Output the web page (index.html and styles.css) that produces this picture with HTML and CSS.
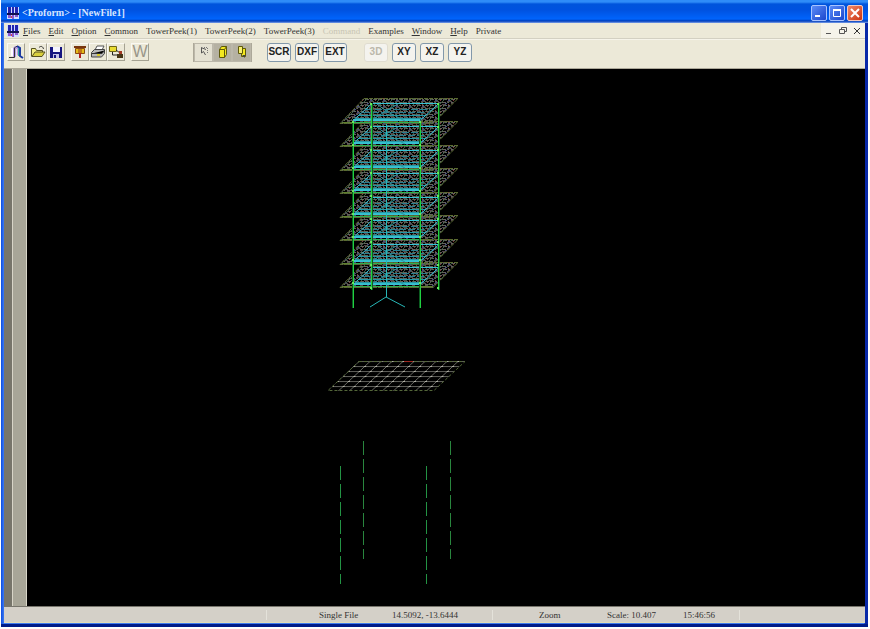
FILE: index.html
```html
<!DOCTYPE html>
<html lang="en">
<head>
<meta charset="utf-8">
<title>Proform - NewFile1</title>
<link rel="stylesheet" href="styles.css">
</head>
<body>
<svg width="0" height="0" class="sprites" aria-hidden="true">
  <symbol id="logo" viewBox="0 0 12 12">
    <path fill="#cfdcff" d="M0 0h12v12H0z"/>
    <path fill="#2424b0" d="M1 0h3v6H1zM5 0h2v6H5zM8 0h3v6H8z"/>
    <path fill="#101050" d="M0 6h12v2H0z"/>
    <path fill="#8a5ad0" d="M1 8h3v3H1zM5 8h2v4H5zM8 8h3v2H8z"/>
    <path fill="#d04848" d="M4 9h1v2H4z"/>
  </symbol>
</svg>
<div class="window">
  <header class="titlebar">
    <svg class="logo"><use href="#logo"/></svg>
    <h1 class="title">&lt;Proform&gt; - [NewFile1]</h1>
    <div class="captions">
      <button class="caption" aria-label="Minimize"><svg viewBox="0 0 14 14"><path fill="#fff" d="M3 9h5v2H3z"/></svg></button>
      <button class="caption" aria-label="Maximize"><svg viewBox="0 0 14 14"><path fill="none" stroke="#fff" d="M3.500 4.500h7v6h-7z"/><path fill="#fff" d="M3 3h8v2H3z"/></svg></button>
      <button class="caption close" aria-label="Close"><svg viewBox="0 0 14 14"><path stroke="#fff" stroke-width="2" d="M3 3l8 8M11 3l-8 8"/></svg></button>
    </div>
  </header>
  <nav class="menubar">
    <svg class="logo"><use href="#logo"/></svg>
    <div class="menus">
      <button class="menu"><u>F</u>iles</button>
      <button class="menu"><u>E</u>dit</button>
      <button class="menu"><u>O</u>ption</button>
      <button class="menu"><u>C</u>ommon</button>
      <button class="menu">TowerPeek(1)</button>
      <button class="menu">TowerPeek(2)</button>
      <button class="menu">TowerPeek(3)</button>
      <button class="menu" disabled>Command</button>
      <button class="menu">Examples</button>
      <button class="menu"><u>W</u>indow</button>
      <button class="menu"><u>H</u>elp</button>
      <button class="menu">Private</button>
    </div>
    <div class="mdi">
      <button aria-label="Minimize document"><svg viewBox="0 0 10 10"><path fill="#555" d="M2 7h5v1H2z"/></svg></button>
      <button aria-label="Restore document"><svg viewBox="0 0 10 10"><path fill="none" stroke="#555" d="M3.500 3V1.500h5v4H7M1.500 3.500h5v4h-5z"/></svg></button>
      <button aria-label="Close document"><svg viewBox="0 0 10 10"><path stroke="#333" d="M2 2l6 6M8 2l-6 6"/></svg></button>
    </div>
  </nav>
  <div class="toolbar">
    <div class="tools">
      <button class="tool" aria-label="New"><svg viewBox="0 0 16 16"><path fill="#b79be4" d="M5 13V4l2-2h3l2 2v8l-3-1V5H8v8z"/><path fill="none" stroke="#fff" stroke-width="2" d="M4 12V4"/><path fill="none" stroke="#333" d="M1 13.500h5.500V4l1.500-1.500h2"/><path fill="none" stroke="#1c3aa0" stroke-width="2" d="M9 2l3 2v8l3 2"/><path fill="none" stroke="#2fa6a6" d="M10.500 4v8"/></svg></button>
    </div>
    <div class="tools">
      <button class="tool" aria-label="Open"><svg viewBox="0 0 16 16"><path fill="#f4ee80" stroke="#555020" d="M1.500 12.500v-8h4l1 2h6v2"/><path fill="#d9cf3c" stroke="#555020" d="M2 12.500l3-4.500h10l-3 4.500z"/><path fill="none" stroke="#333" d="M9 3.500c2-2 4-1 4.500 1.500"/></svg></button>
      <button class="tool" aria-label="Save"><svg viewBox="0 0 16 16"><path fill="#151580" d="M2 3h12v11H2z"/><path fill="#f4f4ff" d="M5 3h7v5H5z"/><path fill="#c4c4e8" d="M5 10h6v4H5z"/><path fill="#151580" d="M6 11h2v3H6z"/></svg></button>
    </div>
    <div class="tools">
      <button class="tool" aria-label="Plot"><svg viewBox="0 0 16 16"><path fill="#79360f" d="M2 2h12v2H2z"/><path fill="#e5bc18" stroke="#8a4a10" d="M3.500 4.500h9v5h-9z"/><path fill="#c07818" d="M6 5h4v4H6z"/><path fill="#b32020" d="M7 9h2v5H7z"/></svg></button>
      <button class="tool" aria-label="Print"><svg viewBox="0 0 16 16"><path fill="#fff" stroke="#555" d="M5 6l2-4h7l-2 4"/><path fill="#b8b8b8" stroke="#444" d="M1.500 8.500l3-3h10v4l-3 3.500h-10z"/><path stroke="#333" d="M2 9.500h10l2.500-3"/><path fill="#d8c92c" d="M7 10h3v2H7z"/></svg></button>
      <button class="tool" aria-label="Tree"><svg viewBox="0 0 16 16"><path fill="#e9dc30" stroke="#6f6618" d="M1.500 2.500h7v5h-7z"/><path fill="none" stroke="#222" d="M4.500 8v3H9M8 6l4 3"/><path fill="#a33922" d="M11 7h3v3h-3z"/><path fill="#463516" d="M9 10h6v4H9z"/></svg></button>
    </div>
    <div class="tools">
      <button class="tool word" aria-label="Word" disabled>W</button>
    </div>
    <div class="modes">
      <button class="mode picked" aria-label="Select"><svg viewBox="0 0 16 16"><path fill="none" stroke="#555" d="M5.500 4v5l2-1.500 2 3.500M5 3.500l5 2"/><path stroke="#777" stroke-dasharray="1 1" d="M8 3.500h4M11.500 4v6"/></svg></button>
      <button class="mode" aria-label="Solid"><svg viewBox="0 0 16 16"><path fill="#f3e820" stroke="#5e5908" d="M4.500 5.500l2-3h5v8l-2 3h-5zM4.500 5.500h5v8M9.500 5.500l2-3"/></svg></button>
      <button class="mode" aria-label="Copy"><svg viewBox="0 0 16 16"><path fill="#f3e820" stroke="#5e5908" d="M7.500 4.500h4v8h-4z"/><path fill="#f8f070" stroke="#5e5908" d="M4.500 2.500h4v7h-4z"/><path fill="#444" d="M8 11h3v3z"/></svg></button>
    </div>
    <div class="keys">
      <button class="key">SCR</button>
      <button class="key">DXF</button>
      <button class="key">EXT</button>
    </div>
    <div class="keys">
      <button class="key" disabled>3D</button>
      <button class="key">XY</button>
      <button class="key">XZ</button>
      <button class="key">YZ</button>
    </div>
  </div>
  <main class="workspace">
    <div class="rail dark"></div>
    <div class="rail"></div>
    <svg class="model" role="img" aria-label="Tower frame model">
      <defs>
        <pattern id="mesh" width="13" height="6" patternUnits="userSpaceOnUse">
          <path stroke="#62625c" stroke-dasharray="4 1 2 2" d="M0 .5h13M1 3.500h12"/>
          <path stroke="#55454c" d="M0 2.500h3M5 5.500h5M9 1.500h3"/>
          <path stroke="#3f5c46" d="M0 6l6-6M7 6l6-6"/>
          <path stroke="#803c3c" d="M6 2.500h1M11 4.500h1"/>
          <path stroke="#484880" d="M3 1.500h2M6 4.500h2"/>
        </pattern>
        <pattern id="grid" width="11" height="5" patternUnits="userSpaceOnUse" patternTransform="translate(359 361) skewX(-47)">
          <path stroke="#6c6c66" d="M0 .5h11M.5 0v5"/>
          <path stroke="#c0c0b4" d="M0 .5h2"/>
        </pattern>
        <g id="plate">
          <path fill="url(#mesh)" d="M364 98h94l-25 26h-93z"/>
          <path fill="none" stroke="#5a6a30" stroke-dasharray="4 1" d="M364 98.500h94l-25 25h-93z"/>
          <path stroke="#5f8030" d="M342 122.500h91"/>
        </g>
        <g id="beams" fill="none">
          <path stroke="#35c3d6" d="M372 103.500h67l-19 17h-67z"/>
          <path stroke="#2497a7" d="M359 115.500h66M356 118.500h66"/>
          <path stroke="#287e91" stroke-dasharray="7 2" d="M366 109.500h64M363 112.500h62"/>
          <path stroke="#36becb" d="M353 119.500h67"/>
          <path stroke="#2fb050" d="M353 122.500h67"/>
          <path stroke="#2c949d" d="M370 121l16-10 19 10M386 111l12-7M386 111l-9-7"/>
        </g>
      </defs>
      <g transform="translate(-27 -69)">
        <use href="#plate"/><use href="#plate" y="23"/><use href="#plate" y="47"/><use href="#plate" y="70"/>
        <use href="#plate" y="94"/><use href="#plate" y="117"/><use href="#plate" y="141"/><use href="#plate" y="164"/>
        <use href="#beams"/><use href="#beams" y="23"/><use href="#beams" y="47"/><use href="#beams" y="70"/>
        <use href="#beams" y="94"/><use href="#beams" y="117"/><use href="#beams" y="141"/><use href="#beams" y="164"/>
        <path fill="none" stroke="#27b7b7" d="M386.500 124v173M370 307l16-10 19 10"/>
        <path stroke="#0c5c20" stroke-width="2" d="M353 121v187M372 103v187M420 121v187M439 103v187"/>
        <path stroke="#20d040" d="M353.500 121v187M371.500 103v187M420.500 121v187M438.500 103v187"/>
        <path stroke="#65e85e" stroke-width="2" stroke-dasharray="2 21" d="M353 121v166M371 103v187M420 121v166M438 103v187"/>
        <path fill="url(#grid)" d="M359 361h106l-31 30H328z"/>
        <path fill="none" stroke="#536638" stroke-dasharray="3 2" d="M359 361.500h106l-31 29H328z"/>
        <path stroke="#9c2820" d="M404 361.500h9"/>
        <path stroke="#239344" stroke-dasharray="14 4" d="M340.500 466v118M426.500 466v118"/>
        <path stroke="#29863e" stroke-dasharray="14 4" d="M363.500 441v118M450.500 441v118"/>
      </g>
    </svg>
  </main>
  <footer class="status">
    <span class="split"></span>
    <span class="file">Single File</span>
    <span class="split">14.5092, -13.6444</span>
    <span class="action">Zoom</span>
    <span>Scale: 10.407</span>
    <span class="split">15:46:56</span>
    <span></span>
  </footer>
</div>
</body>
</html>
```
FILE: styles.css
```css
* { box-sizing: border-box; }
body {
  margin: 0;
  height: 100vh;
  padding: 0 2px 2px 1px;
  background: #fff;
  font: 9px/12px "Liberation Serif", serif;
  color: #333;
}
button { margin: 0; padding: 0; border: 0; background: none; font: inherit; color: inherit; }
svg { display: block; }
.sprites { position: absolute; }
.window {
  height: 100%;
  display: flex;
  flex-direction: column;
  padding: 0 3px 1px;
  background: linear-gradient(90deg, #0a4be0, #3f7bf0 3px, #3f7bf0 calc(100% - 4px), #0828a8 calc(100% - 3px));
  border-bottom: 3px solid #001c88;
}
.titlebar {
  flex: none;
  height: 23px;
  margin: 0 -3px;
  padding: 3px 5px 0 6px;
  display: flex;
  align-items: center;
  gap: 3px;
  background: linear-gradient(#2f8cf8, #2f8cf8 2px, #0054dc 4px, #0052e0 10px, #0064fc 19px, #003cb8 21px, #7ea2ec);
}
.logo { flex: none; width: 12px; height: 12px; }
.title { margin: 0; flex: 1; font-size: 10px; line-height: 12px; font-weight: bold; color: #d8e6ff; }
.captions { display: flex; gap: 2px; }
.caption { width: 16px; height: 16px; border: 1px solid #a9c4ff; border-radius: 2px; background: linear-gradient(135deg, #5a8cf8, #1c46cc); }
.caption.close { background: linear-gradient(135deg, #f08868, #cc3410); border-color: #f4c8bc; }
.menubar {
  flex: none;
  height: 16px;
  display: flex;
  align-items: center;
  gap: 4px;
  padding-left: 3px;
  background: #ece9d8;
  border-bottom: 1px solid #d3d0c2;
}
.menus { flex: 1; display: flex; gap: 8px; }
.menu:disabled { color: #c8c5b4; }
.mdi { display: flex; align-items: center; gap: 4px; height: 100%; padding: 0 3px; background: #f5f3ea; }
.mdi svg { width: 10px; height: 10px; }
.toolbar {
  flex: none;
  height: 30px;
  display: flex;
  align-items: center;
  padding: 0 4px 4px 3px;
  background: #ece9d8;
  border-top: 1px solid #f6f4ea;
  border-bottom: 1px solid #aca899;
}
.tools { display: flex; margin-right: 4px; }
.tools:nth-child(2) { margin-right: 6px; }
.tools:nth-child(3) { margin-right: 6px; }
.tool { width: 18px; height: 18px; display: grid; place-items: center; border: 1px solid; border-color: #faf9f2 #a5a292 #a5a292 #faf9f2; }
.tool svg { width: 16px; height: 16px; }
.word { font: 16px/16px "Liberation Sans", sans-serif; color: #99968a; }
.modes { display: flex; margin: 0 15px 0 40px; background: #aca899; padding: 0 1px; }
.mode { width: 19px; height: 19px; display: grid; place-items: center; border: 1px solid #bcb8aa; background: #b5b1a2; }
.mode svg { width: 16px; height: 16px; }
.picked { background: #e4e1d2; }
.keys { display: flex; gap: 4px; margin-right: 17px; }
.key {
  width: 24px;
  height: 19px;
  border: 1px solid #8298aa;
  border-radius: 3px;
  background: #f4f3ee;
  font: bold 10px/16px "Liberation Sans", sans-serif;
  color: #222;
}
.key:disabled { border-color: #e0ddd0; color: #bbb8aa; }
.workspace { flex: 1; min-height: 0; display: flex; gap: 1px; background: #d8d5c8; border-bottom: 1px solid #77756c; }
.rail { flex: none; width: 13px; background: #a8a698; }
.rail.dark { width: 8px; background: #77756a; }
.model { flex: 1; min-width: 0; height: 100%; background: #000; }
.status {
  flex: none;
  height: 16px;
  display: grid;
  grid-template-columns: 263fr 125fr 101fr 114fr 76fr 57fr 125fr;
  align-items: center;
  background: #d4d0c8;
  border-bottom: 1px solid #e0dcb8;
}
.status span { height: 10px; line-height: 10px; }
.split { border-right: 1px solid #e4e2da; }
.file { padding-left: 52px; }
.action { padding-left: 46px; }
```
